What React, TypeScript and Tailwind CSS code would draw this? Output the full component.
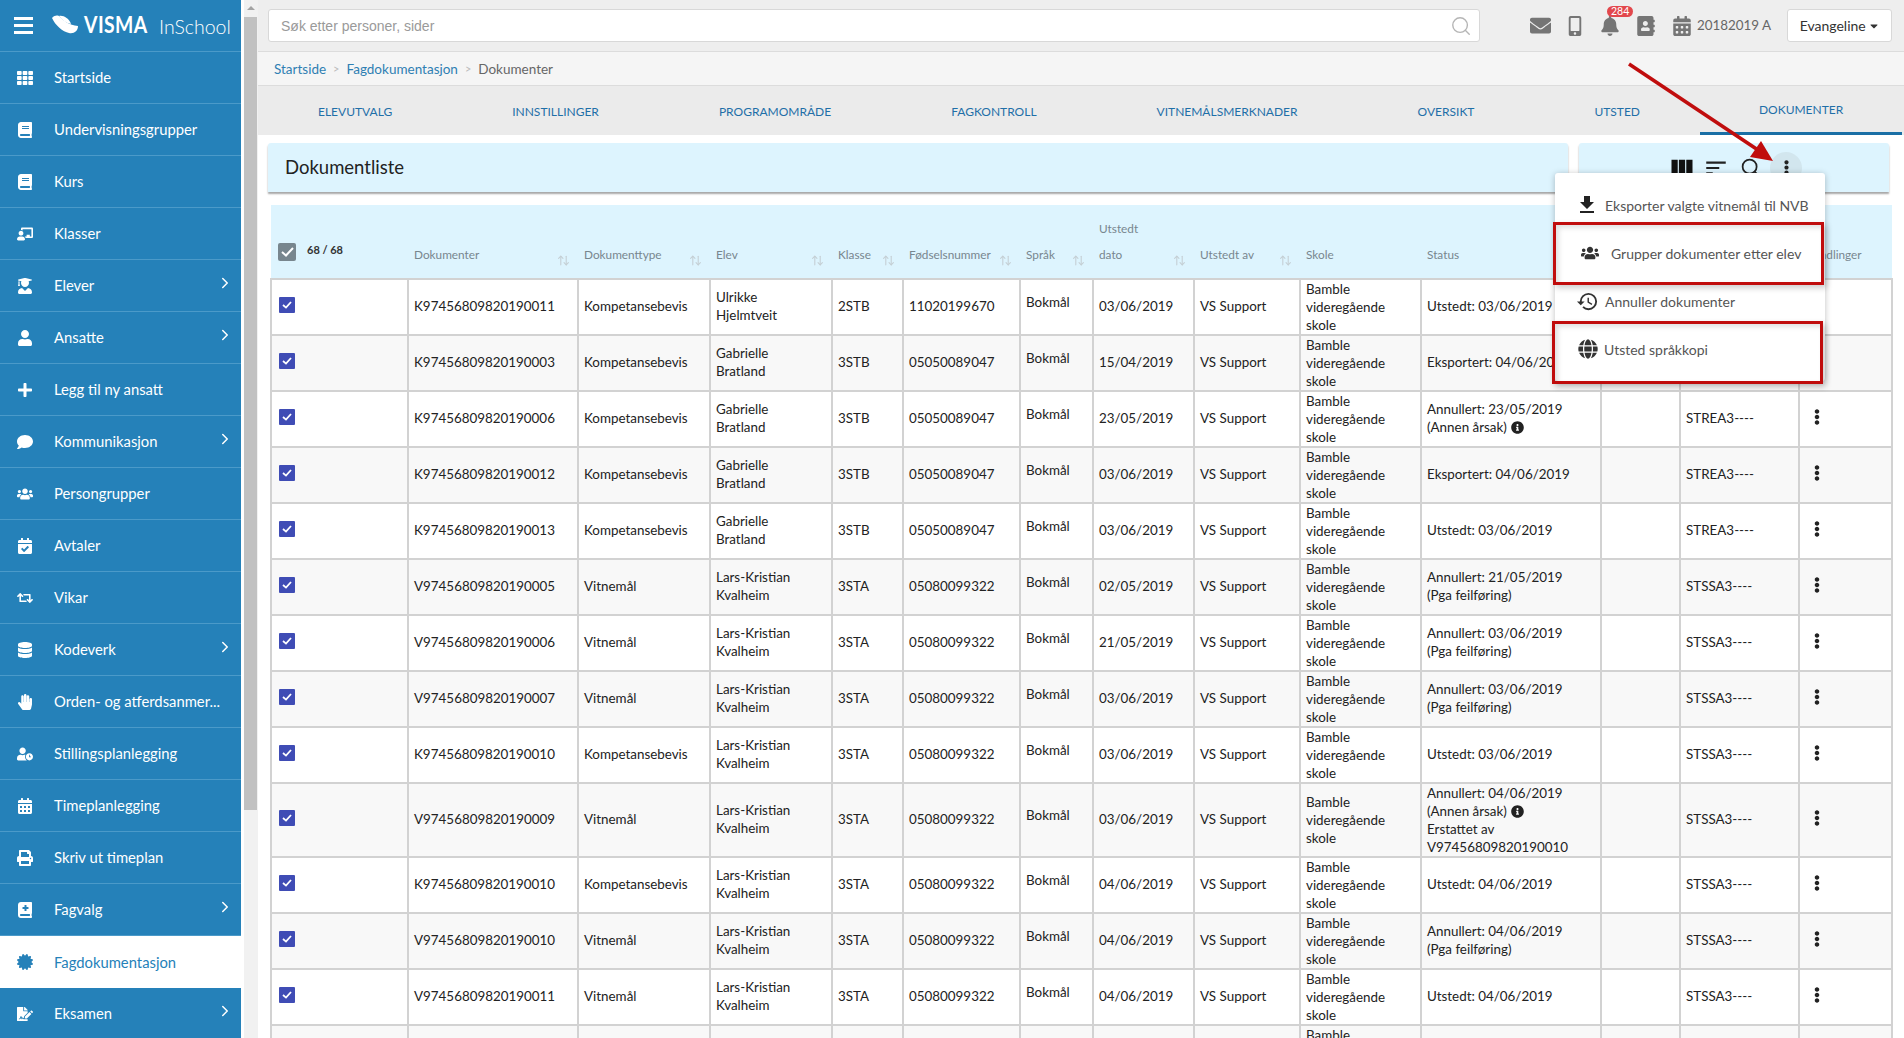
import { ArrowUpDown, ChevronRight, Search } from 'lucide-react';
import type { IconType } from 'react-icons';
import {
  FaAddressBook,
  FaBell,
  FaBook,
  FaBookMedical,
  FaCalendarAlt,
  FaCalendarCheck,
  FaCaretDown,
  FaCertificate,
  FaChalkboardTeacher,
  FaComment,
  FaDatabase,
  FaEllipsisV,
  FaEnvelope,
  FaFileSignature,
  FaGlobe,
  FaHandPaper,
  FaInfoCircle,
  FaMobileAlt,
  FaPlus,
  FaPrint,
  FaRetweet,
  FaTh,
  FaUser,
  FaUserClock,
  FaUserGraduate,
  FaUsers,
} from 'react-icons/fa';
import { MdFileDownload, MdHistory, MdSort, MdViewColumn } from 'react-icons/md';

type NavItem = { label: string; icon: IconType; more?: boolean; active?: boolean };

const navItems: NavItem[] = [
  { label: 'Startside', icon: FaTh },
  { label: 'Undervisningsgrupper', icon: FaBook },
  { label: 'Kurs', icon: FaBook },
  { label: 'Klasser', icon: FaChalkboardTeacher },
  { label: 'Elever', icon: FaUserGraduate, more: true },
  { label: 'Ansatte', icon: FaUser, more: true },
  { label: 'Legg til ny ansatt', icon: FaPlus },
  { label: 'Kommunikasjon', icon: FaComment, more: true },
  { label: 'Persongrupper', icon: FaUsers },
  { label: 'Avtaler', icon: FaCalendarCheck },
  { label: 'Vikar', icon: FaRetweet },
  { label: 'Kodeverk', icon: FaDatabase, more: true },
  { label: 'Orden- og atferdsanmer...', icon: FaHandPaper },
  { label: 'Stillingsplanlegging', icon: FaUserClock },
  { label: 'Timeplanlegging', icon: FaCalendarAlt },
  { label: 'Skriv ut timeplan', icon: FaPrint },
  { label: 'Fagvalg', icon: FaBookMedical, more: true },
  { label: 'Fagdokumentasjon', icon: FaCertificate, active: true },
  { label: 'Eksamen', icon: FaFileSignature, more: true },
];

const tabs = ['Elevutvalg', 'Innstillinger', 'Programområde', 'Fagkontroll', 'Vitnemålsmerknader', 'Oversikt', 'Utsted', 'Dokumenter'];

const colWidths = [137, 170, 132, 122, 71, 117, 73, 101, 106, 121, 180, 79, 119, 93];

const headers = [
  { label: 'Dokumenter', sort: true },
  { label: 'Dokumenttype', sort: true },
  { label: 'Elev', sort: true },
  { label: 'Klasse', sort: true },
  { label: 'Fødselsnummer', sort: true },
  { label: 'Språk', sort: true },
  { label: 'dato', top: 'Utstedt', sort: true },
  { label: 'Utstedt av', sort: true },
  { label: 'Skole' },
  { label: 'Status' },
  { label: '' },
  { label: '' },
  { label: 'Handlinger' },
];

const ulrikke = { elev: ['Ulrikke', 'Hjelmtveit'], klasse: '2STB', fnr: '11020199670', kode: 'STREA3----' };
const gabrielle = { elev: ['Gabrielle', 'Bratland'], klasse: '3STB', fnr: '05050089047', kode: 'STREA3----' };
const lars = { elev: ['Lars-Kristian', 'Kvalheim'], klasse: '3STA', fnr: '05080099322', kode: 'STSSA3----' };

type Row = {
  id: string;
  type: string;
  dato: string;
  status: string[];
  info?: boolean;
  person: typeof lars;
};

const rows: Row[] = [
  { id: 'K97456809820190011', type: 'Kompetansebevis', dato: '03/06/2019', status: ['Utstedt: 03/06/2019'], person: ulrikke },
  { id: 'K97456809820190003', type: 'Kompetansebevis', dato: '15/04/2019', status: ['Eksportert: 04/06/2019'], person: gabrielle },
  { id: 'K97456809820190006', type: 'Kompetansebevis', dato: '23/05/2019', status: ['Annullert: 23/05/2019', '(Annen årsak)'], info: true, person: gabrielle },
  { id: 'K97456809820190012', type: 'Kompetansebevis', dato: '03/06/2019', status: ['Eksportert: 04/06/2019'], person: gabrielle },
  { id: 'K97456809820190013', type: 'Kompetansebevis', dato: '03/06/2019', status: ['Utstedt: 03/06/2019'], person: gabrielle },
  { id: 'V97456809820190005', type: 'Vitnemål', dato: '02/05/2019', status: ['Annullert: 21/05/2019', '(Pga feilføring)'], person: lars },
  { id: 'V97456809820190006', type: 'Vitnemål', dato: '21/05/2019', status: ['Annullert: 03/06/2019', '(Pga feilføring)'], person: lars },
  { id: 'V97456809820190007', type: 'Vitnemål', dato: '03/06/2019', status: ['Annullert: 03/06/2019', '(Pga feilføring)'], person: lars },
  { id: 'K97456809820190010', type: 'Kompetansebevis', dato: '03/06/2019', status: ['Utstedt: 03/06/2019'], person: lars },
  { id: 'V97456809820190009', type: 'Vitnemål', dato: '03/06/2019', status: ['Annullert: 04/06/2019', '(Annen årsak)', 'Erstattet av', 'V97456809820190010'], info: true, person: lars },
  { id: 'K97456809820190010', type: 'Kompetansebevis', dato: '04/06/2019', status: ['Utstedt: 04/06/2019'], person: lars },
  { id: 'V97456809820190010', type: 'Vitnemål', dato: '04/06/2019', status: ['Annullert: 04/06/2019', '(Pga feilføring)'], person: lars },
  { id: 'V97456809820190011', type: 'Vitnemål', dato: '04/06/2019', status: ['Utstedt: 04/06/2019'], person: lars },
];

const cell = 'border-2 border-[#d2d2d2] px-[5px] align-middle';
const textCell = 'border-2 border-[#d2d2d2] px-[5px] pb-[2px] align-middle';

function Sidebar() {
  return (
    <aside className="w-[241px] shrink-0 bg-[#2581b9] font-['Lato',sans-serif] text-[14.8px] text-white">
      <div className="flex h-[52px] items-center border-b border-[#4b9ac9] pl-[14px]">
        <div className="flex w-[19px] flex-col gap-[4px]">
          <span className="h-[3px] bg-white" />
          <span className="h-[3px] bg-white" />
          <span className="h-[3px] bg-white" />
        </div>
        <svg className="ml-[18px] mt-[-2px] shrink-0" width="28" height="20" viewBox="0 0 28 20" aria-hidden="true">
          <path d="M1 3 C4 0 7 0 9 2 C13 6 18 10 27 11 C27 16 23 19 18 18 C12 17 4 10 1 3 Z" fill="#fff" />
          <path d="M8 1 C12 0 18 3 20 9 C15 8 11 5 8 1 Z" fill="#fff" />
        </svg>
        <span className="ml-[5px] mt-[-3px] inline-block w-[65px] origin-left scale-x-[0.88] text-[22px] font-bold tracking-[0.5px]">VISMA</span>
        <span className="ml-[10px] mt-[2px] whitespace-nowrap text-[19.5px] font-light">InSchool</span>
      </div>
      {navItems.map((item) => (
        <div
          key={item.label}
          className={
            item.active
              ? 'flex h-[52px] items-center bg-white text-[#2581b9]'
              : 'flex h-[52px] items-center border-b border-[#4b9ac9]'
          }
        >
          <span className="flex w-[54px] shrink-0 justify-center pr-[4px]">
            <item.icon size={16} />
          </span>
          <span className="flex-1 whitespace-nowrap">{item.label}</span>
          {item.more && <ChevronRight size={18} className="mb-[6px] mr-[7px]" />}
        </div>
      ))}
    </aside>
  );
}

function PageScrollbar() {
  return (
    <div className="ml-[3px] flex w-[13px] shrink-0 flex-col bg-[#f1f1f1]">
      <div className="flex h-[17px] items-center justify-center">
        <span className="mt-[-2px] border-x-[4px] border-b-[4px] border-x-transparent border-b-[#a3a3a3]" />
      </div>
      <div className="h-[793px] bg-[#c1c1c1]" />
    </div>
  );
}

function TopBar() {
  return (
    <header className="flex h-[52px] items-center border-b border-[#dcdcdc] bg-[#eeeeee] pl-[10px]">
      <div className="flex h-[33px] w-[1212px] items-center rounded-[3px] border border-[#d8d8d8] bg-white pl-[12px] pr-[7px]">
        <input
          readOnly
          placeholder="Søk etter personer, sider"
          className="mt-[1px] flex-1 bg-transparent font-['Liberation_Sans',sans-serif] text-[14px] outline-none placeholder:text-[#9a9a9a]"
        />
        <Search size={22} strokeWidth={1.5} className="text-[#b5b5b5]" />
      </div>
      <FaEnvelope size={21} className="ml-[50px] text-[#757575]" />
      <FaMobileAlt size={20} className="ml-[14px] text-[#757575]" />
      <div className="relative ml-[15px]">
        <FaBell size={20} className="text-[#757575]" />
        <span className="absolute left-[7px] top-[-10px] rounded-full bg-[#e2474c] px-[4px] text-[10.5px] leading-[11px] text-white">284</span>
      </div>
      <FaAddressBook size={20} className="ml-[16px] text-[#757575]" />
      <FaCalendarAlt size={20} className="ml-[16px] text-[#757575]" />
      <span className="ml-[5px] whitespace-nowrap text-[13.4px] text-[#666]">20182019 A</span>
      <div className="ml-[16px] flex h-[33px] w-[105px] items-center justify-center rounded-[3px] border border-[#d8d8d8] bg-white text-[14px] text-[#333]">
        Evangeline
        <FaCaretDown size={12} className="ml-[2px]" />
      </div>
    </header>
  );
}

function Breadcrumbs() {
  return (
    <nav className="flex h-[34px] items-center gap-[7px] border-b border-[#dcdcdc] bg-[#f5f5f5] pl-[16px] pt-[1px] text-[13.5px] text-[#2f7fb3]">
      <span>Startside</span>
      <span className="text-[11px] text-[#bbb]">&gt;</span>
      <span>Fagdokumentasjon</span>
      <span className="text-[11px] text-[#bbb]">&gt;</span>
      <span className="text-[#666]">Dokumenter</span>
    </nav>
  );
}

function Tabs() {
  return (
    <div className="flex h-[49px] bg-[#ebebeb] pr-[2px]">
      {tabs.map((tab) => (
        <div
          key={tab}
          className={
            tab === 'Dokumenter'
              ? 'flex items-center whitespace-nowrap border-b-[3px] border-[#1a6fa5] px-[59px] pt-[2px] text-[12px] uppercase text-[#1f6fa8]'
              : 'flex items-center whitespace-nowrap px-[60px] pt-[2px] text-[12px] uppercase text-[#1f6fa8]'
          }
        >
          {tab}
        </div>
      ))}
    </div>
  );
}

function Toolbar() {
  return (
    <div className="mx-[10px] mt-[8px] flex gap-[11px]">
      <div className="flex h-[49px] w-[1300px] items-center rounded-t-[3px] bg-[#ddf4fe] pl-[17px] pt-[1px] text-[18.5px] text-[#222] shadow-[0_2px_2px_rgba(0,0,0,0.35)]">
        Dokumentliste
      </div>
      <div className="flex h-[49px] w-[310px] items-center rounded-t-[3px] bg-[#ddf4fe] pl-[89px] text-[#222] shadow-[0_2px_2px_rgba(0,0,0,0.35)]">
        <MdViewColumn size={28} className="text-[#111]" />
        <MdSort size={26} className="ml-[7px]" />
        <Search size={21} strokeWidth={2} className="ml-[11px]" />
        <span className="ml-[9px] flex h-[32px] w-[32px] items-center justify-center rounded-full bg-[#d2e6ee]">
          <FaEllipsisV size={15} />
        </span>
      </div>
    </div>
  );
}

function Checkbox() {
  return (
    <span className="flex h-[16px] w-[16px] items-center justify-center rounded-[1px] bg-[#3f4cb5]">
      <svg width="10" height="8" viewBox="0 0 10 8" aria-hidden="true">
        <path d="M1 4 L4 6.6 L9 1" fill="none" stroke="#fff" strokeWidth="1.8" />
      </svg>
    </span>
  );
}

function SchoolLines() {
  return (
    <>
      <div>Bamble</div>
      <div>videregående</div>
      <div>skole</div>
    </>
  );
}

function DocumentTable() {
  return (
    <table className="ml-[12px] mt-[13px] w-[1621px] table-fixed border-collapse text-[13.4px] leading-[18px] text-[#222]">
      <colgroup>
        {colWidths.map((w, i) => (
          <col key={i} style={{ width: w }} />
        ))}
      </colgroup>
      <thead>
        <tr className="h-[74px] bg-[#ddf4fe] text-left text-[11.8px] font-normal text-[#78868e]">
          <th className="border-b-2 border-[#d2d2d2] pb-[15px] pl-[7px] align-bottom font-normal">
            <div className="flex items-center">
              <span className="flex h-[18px] w-[18px] items-center justify-center rounded-[2px] bg-[#78868e]">
                <svg width="13" height="10" viewBox="0 0 13 10" aria-hidden="true">
                  <path d="M1 5 L5 8.5 L12 1" fill="none" stroke="#fff" strokeWidth="2" />
                </svg>
              </span>
              <span className="mb-[4px] ml-[11px] text-[11px] font-bold text-[#333]">68 / 68</span>
            </div>
          </th>
          {headers.map((h, i) => (
            <th key={i} className="border-b-2 border-[#d2d2d2] pb-[14px] pl-[6px] pr-[8px] align-bottom font-normal">
              {h.top && <div className="mb-[8px]">{h.top}</div>}
              <div className="flex items-end justify-between">
                <span>{h.label}</span>
                {h.sort && <ArrowUpDown size={13} className="mb-[-3px] text-[#c4cfd4]" />}
              </div>
            </th>
          ))}
        </tr>
      </thead>
      <tbody>
        {rows.map((row, i) => (
          <tr key={i} className={i % 2 === 1 ? 'bg-[#f8f8f8]' : 'bg-white'}>
            <td className={cell}>
              <div className="mb-[4px] ml-[2px]">
                <Checkbox />
              </div>
            </td>
            <td className={textCell}>{row.id}</td>
            <td className={textCell}>{row.type}</td>
            <td className={textCell}>
              {row.person.elev.map((line) => (
                <div key={line}>{line}</div>
              ))}
            </td>
            <td className={textCell}>{row.person.klasse}</td>
            <td className={textCell}>{row.person.fnr}</td>
            <td className={cell}>
              <div className="mb-[10px]">Bokmål</div>
            </td>
            <td className={textCell}>{row.dato}</td>
            <td className={textCell}>VS Support</td>
            <td className={cell}>
              <SchoolLines />
            </td>
            <td className={cell}>
              <div className={row.status.length === 4 ? '' : 'mb-[2px]'}>
                {row.status.map((line) => (
                  <div key={line} className="flex items-center gap-[4px] whitespace-nowrap">
                    {line}
                    {row.info && line === '(Annen årsak)' && <FaInfoCircle size={13} className="text-[#222]" />}
                  </div>
                ))}
              </div>
            </td>
            <td className={cell} />
            <td className={textCell}>{row.person.kode}</td>
            <td className={cell}>
              <FaEllipsisV size={16} className="mb-[4px] ml-[4px] text-[#222]" />
            </td>
          </tr>
        ))}
        <tr className="bg-[#f8f8f8]">
          {colWidths.map((_, i) => (
            <td key={i} className={cell}>
              {i === 9 && <SchoolLines />}
            </td>
          ))}
        </tr>
      </tbody>
    </table>
  );
}

function ActionMenu() {
  return (
    <div className="absolute left-[1555px] top-[173px] w-[270px] rounded-[3px] bg-white py-[8px] text-[14px] text-[#555] shadow-[0_1px_6px_rgba(0,0,0,0.25)]">
      <div className="flex h-[48px] items-center pl-[20px]">
        <MdFileDownload size={24} className="mr-[6px] text-[#222]" />
        Eksporter valgte vitnemål til NVB
      </div>
      <div className="flex h-[48px] items-center pl-[26px]">
        <FaUsers size={18} className="mr-[12px] text-[#333]" />
        Grupper dokumenter etter elev
      </div>
      <div className="flex h-[48px] items-center pl-[21px]">
        <MdHistory size={23} className="mr-[6px] text-[#333]" />
        Annuller dokumenter
      </div>
      <div className="flex h-[48px] items-center pl-[23px]">
        <FaGlobe size={20} className="mr-[6px] text-[#333]" />
        Utsted språkkopi
      </div>
    </div>
  );
}

function Annotations() {
  return (
    <>
      <div className="absolute left-[1553px] top-[222px] h-[63px] w-[271px] border-[3px] border-[#c00d0d] shadow-[3px_3px_6px_rgba(0,0,0,0.2),inset_3px_3px_5px_rgba(0,0,0,0.12)]" />
      <div className="absolute left-[1552px] top-[321px] h-[63px] w-[271px] border-[3px] border-[#c00d0d] shadow-[3px_3px_6px_rgba(0,0,0,0.2),inset_3px_3px_5px_rgba(0,0,0,0.12)]" />
      <svg className="pointer-events-none absolute left-[1620px] top-[55px]" width="170" height="120" viewBox="0 0 170 120" aria-hidden="true">
        <path d="M9 9 L138 95" stroke="#c00d0d" strokeWidth="3.5" fill="none" />
        <path d="M153 106 L130 102 L141 86 Z" fill="#c00d0d" />
      </svg>
    </>
  );
}

export default function App() {
  return (
    <div className="relative flex h-screen overflow-hidden bg-white font-['Lato',sans-serif]">
      <Sidebar />
      <PageScrollbar />
      <main className="min-w-0 flex-1 border-l border-[#f1f1f1]">
        <TopBar />
        <Breadcrumbs />
        <Tabs />
        <Toolbar />
        <DocumentTable />
      </main>
      <ActionMenu />
      <Annotations />
    </div>
  );
}
